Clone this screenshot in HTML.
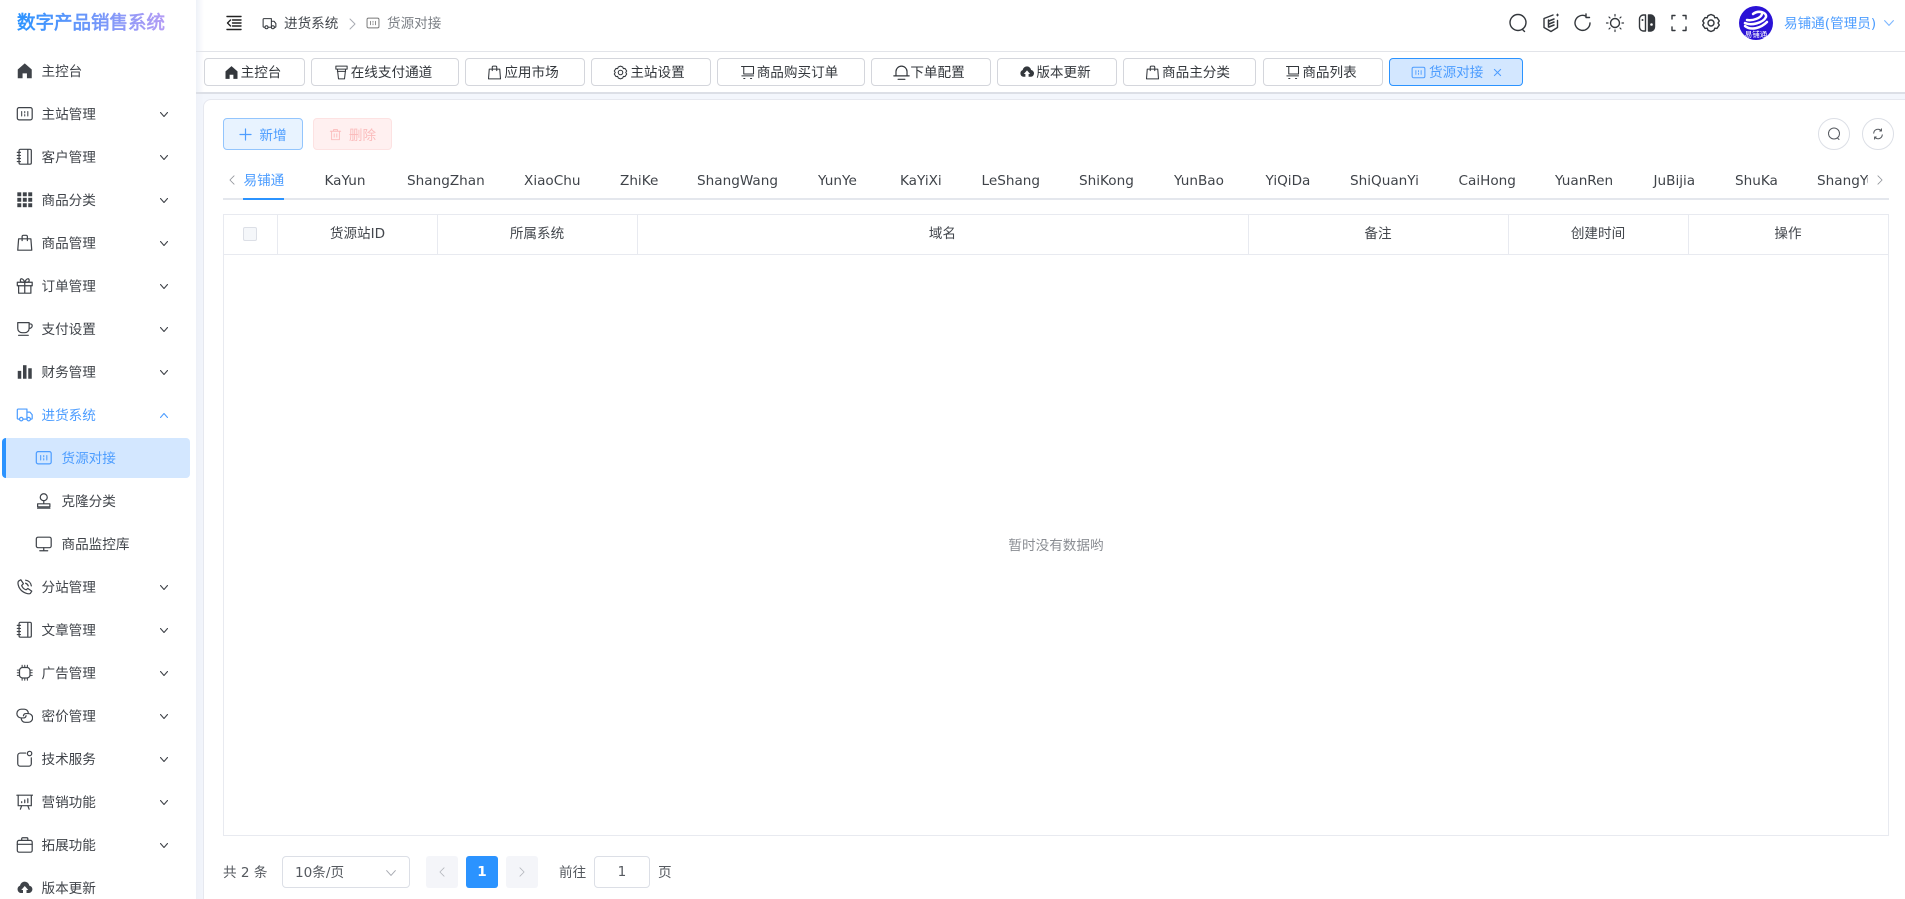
<!DOCTYPE html>
<html lang="zh-CN"><head><meta charset="utf-8"><title>货源对接</title>
<style>
*{box-sizing:border-box;margin:0;padding:0}
html,body{width:1905px;height:899px;overflow:hidden;background:#fff}
body{position:relative;font-family:"DejaVu Sans",sans-serif;font-size:13.6px;color:#3f4349}
.a{position:absolute;white-space:nowrap}
svg{display:block;fill:none;stroke:currentColor;stroke-width:1.4;stroke-linecap:round;stroke-linejoin:round}
.mi{position:absolute;left:0;width:196px;height:40px;line-height:40px;white-space:nowrap}
.mi svg{position:absolute;left:15.500px;top:11.250px;width:17.500px;height:17.500px}
.mi span{position:absolute;left:41.500px;top:1px}
.mi .ch{position:absolute;left:160px;top:17.500px;width:8px;height:5px;stroke-width:1.100}
.sub svg{left:35px}.sub span{left:61.500px}
.t{position:absolute;top:58px;height:28px;border:1px solid #d4d6dc;border-radius:4px;background:#fff;display:flex;align-items:center;justify-content:center;gap:0;font-size:13.6px;color:#33373c;padding-bottom:2px}
.t svg{width:15px;height:15px;margin:2px 2px 0 -4px}
.l{position:absolute;top:169px;height:24px;line-height:24px;font-size:13.6px;color:#3f4349;white-space:nowrap}
.th{position:absolute;top:215px;height:39px;line-height:39px;text-align:center;font-size:13.6px;color:#43474d}
.v{position:absolute;top:214px;width:1px;height:41px;background:#e8eaf0}
.top{position:absolute;top:13px;width:20px;height:20px;color:#33373c}
</style></head><body>
<svg width="0" height="0" style="position:absolute">
<symbol id="i-home" viewBox="0 0 20 20"><path fill="currentColor" stroke="none" d="M10 1.500 18 8.500V18.500H12.500V13H7.500V18.500H2V8.500Z"/></symbol>
<symbol id="i-card" viewBox="0 0 20 20"><rect x="1.500" y="3" width="17" height="14" rx="2"/><path d="M6.500 7.500v5M13.500 7.500v5M10 7.500v1.500M10 11v1.500" stroke-width="1.200"/></symbol>
<symbol id="i-note" viewBox="0 0 20 20"><rect x="3.500" y="1.500" width="14" height="17" rx="1.500"/><path d="M13.500 2v16M1.500 5h3.500M1.500 8.500h3.500M1.500 12h3.500M1.500 15.500h3.500"/></symbol>
<symbol id="i-grid" viewBox="0 0 20 20"><g fill="currentColor" stroke="none"><rect x="1.500" y="1.500" width="4.500" height="4.500"/><rect x="7.800" y="1.500" width="4.500" height="4.500"/><rect x="14" y="1.500" width="4.500" height="4.500"/><rect x="1.500" y="7.800" width="4.500" height="4.500"/><rect x="7.800" y="7.800" width="4.500" height="4.500"/><rect x="14" y="7.800" width="4.500" height="4.500"/><rect x="1.500" y="14" width="4.500" height="4.500"/><rect x="7.800" y="14" width="4.500" height="4.500"/><rect x="14" y="14" width="4.500" height="4.500"/></g></symbol>
<symbol id="i-bag" viewBox="0 0 20 20"><path d="M3 5.500H17L18 18.500H2ZM7 7.500V3A1.500 1.500 0 0 1 8.500 1.500H11.500A1.500 1.500 0 0 1 13 3V7.500"/></symbol>
<symbol id="i-gift" viewBox="0 0 20 20"><rect x="1.500" y="6" width="17" height="4"/><path d="M3 10V18.500H17V10M10 6V18.500M10 6C8 1 4.500 1 5 4.500 5 5.500 7 6 10 6ZM10 6C12 1 15.500 1 15 4.500 15 5.500 13 6 10 6Z"/></symbol>
<symbol id="i-cup" viewBox="0 0 20 20"><path d="M2 3H15V9.500A5 5 0 0 1 10 14.500H7A5 5 0 0 1 2 9.500ZM15 4.500H16.500A2 2 0 0 1 18.500 6.500A3 3 0 0 1 15 9.500M3 17.500H14"/></symbol>
<symbol id="i-bars" viewBox="0 0 20 20"><g fill="currentColor" stroke="none"><rect x="2" y="9" width="4" height="9"/><rect x="8" y="2.500" width="4" height="15.500"/><rect x="14" y="6" width="4" height="12"/></g></symbol>
<symbol id="i-truck" viewBox="0 0 20 20"><path d="M4 15H2.500A1 1 0 0 1 1.500 14V4.500A1 1 0 0 1 2.500 3.500H12.500V15H8.500M12.500 7H16L18.500 10V14A1 1 0 0 1 17.500 15H16.500"/><circle cx="6" cy="15" r="2"/><circle cx="14.500" cy="15" r="2"/></symbol>
<symbol id="i-stamp" viewBox="0 0 20 20"><circle cx="10" cy="6" r="4"/><path d="M10 10V13.500M3 13.500H17V17H3ZM3 18.500H17"/></symbol>
<symbol id="i-mon" viewBox="0 0 20 20"><rect x="1.500" y="2.500" width="17" height="12" rx="2"/><path d="M10 14.500V18M5.500 18H14.500"/></symbol>
<symbol id="i-phone" viewBox="0 0 20 20"><path d="M3 3.500 5.500 2 8.500 6.500 6.500 8.500C7 10.500 9 13 11.500 13.500L13.500 12 18 15 16.500 17.500C15 19 8 17 5 13 2.500 10 1.500 5 3 3.500ZM11 2.500C14.500 3 17 5.500 17.500 9M11 6C12.500 6.500 13.500 7.500 14 9"/></symbol>
<symbol id="i-chip" viewBox="0 0 20 20"><rect x="4" y="4" width="12" height="12" rx="3.500"/><path d="M7 1.500V4M10 1.500V4M13 1.500V4M7 16V18.500M10 16V18.500M13 16V18.500M1.500 7H4M1.500 10H4M1.500 13H4M16 7H18.500M16 10H18.500M16 13H18.500" stroke-width="1.200"/></symbol>
<symbol id="i-link" viewBox="0 0 20 20"><path d="M8 12.500H6A4.500 4.500 0 0 1 6 2.500H9.500A4.500 4.500 0 0 1 14 7M12 7.500H14A5 5 0 0 1 14 17.500H10.500A4.500 4.500 0 0 1 6 13M8.500 10A3 3 0 0 1 11.500 7.500M11.500 10A3 3 0 0 1 8.500 12.500"/></symbol>
<symbol id="i-sq" viewBox="0 0 20 20"><path d="M11 3.500H5A3 3 0 0 0 2 6.500V15.500A3 3 0 0 0 5 18.500H14.500A3 3 0 0 0 17.500 15.500V9"/><circle cx="15.500" cy="4" r="2.500"/></symbol>
<symbol id="i-board" viewBox="0 0 20 20"><path d="M1 2.500H19M2.500 2.500V14.500H17.500V2.500M6.500 14.500 5 18.500M13.500 14.500 15 18.500M6.500 11V10M10 11V8M13.500 11V6.500"/></symbol>
<symbol id="i-brief" viewBox="0 0 20 20"><rect x="1.500" y="5" width="17" height="13.500" rx="2"/><path d="M1.500 9.500H18.500M6.500 5V3A1 1 0 0 1 7.500 2H12.500A1 1 0 0 1 13.500 3V5"/></symbol>
<symbol id="i-cloud" viewBox="0 0 20 20"><path fill="currentColor" stroke="none" d="M10 3A5.500 5.500 0 0 1 15.200 7.500 4.300 4.300 0 0 1 15 16H12V12.500H14L10 8 6 12.500H8V16H5A4.500 4.500 0 0 1 4.600 7.500 5.500 5.500 0 0 1 10 3Z"/></symbol>
<symbol id="i-trash" viewBox="0 0 20 20"><path d="M2 5H18M7 5V2.500H13V5M4 5V18H16V5M8 9V14M12 9V14"/></symbol>
<symbol id="i-cuptab" viewBox="0 0 20 20"><path d="M2.500 1.500H17.500V5.500H2.500ZM4.500 5.500 6 18.500H14L15.500 5.500M4.500 8.500H15.500"/></symbol>
<symbol id="i-cart" viewBox="0 0 20 20"><path d="M2 2H18V12H5V2M2.500 14.500H18M5 18H6.500M14 18H15.500"/></symbol>
<symbol id="i-bell" viewBox="0 0 20 20"><path d="M3.500 13.500V9A6.500 6.500 0 0 1 16.500 9V13.500M1 14H19M6 18H14"/></symbol>
<symbol id="i-gear" viewBox="0 0 20 20"><path d="M10 1.500 13 2.700 13.800 4.800 16 4.600 18.300 8 17 10 18.300 12 16 15.400 13.800 15.200 13 17.300 10 18.500 7 17.300 6.200 15.200 4 15.400 1.700 12 3 10 1.700 8 4 4.600 6.200 4.800 7 2.700Z"/><circle cx="10" cy="10" r="3"/></symbol>
<symbol id="ch-d" viewBox="0 0 8 5" preserveAspectRatio="none"><path d="M.5 .5 4 4.500 7.500 .5" vector-effect="non-scaling-stroke"/></symbol>
<symbol id="ch-u" viewBox="0 0 8 5" preserveAspectRatio="none"><path d="M.5 4.500 4 .5 7.500 4.500" vector-effect="non-scaling-stroke"/></symbol>
</svg>

<!-- sidebar -->
<div class="a" style="left:196px;top:94px;width:1709px;height:805px;background:#f3f6fc"></div>
<div class="a" style="left:196px;top:0;width:8px;height:899px;background:linear-gradient(90deg,#eef1f8,rgba(238,241,248,0));"></div>
<div class="a" style="left:17px;top:11px;height:26px;line-height:26px;font-size:18.500px;font-weight:700;background:linear-gradient(90deg,#2b93ff,#b49cf5);-webkit-background-clip:text;background-clip:text;color:transparent">数字产品销售系统</div>

<div class="mi" style="top:51px"><svg><use href="#i-home"/></svg><span>主控台</span></div>
<div class="mi" style="top:94px"><svg><use href="#i-card"/></svg><span>主站管理</span><svg class="ch"><use href="#ch-d"/></svg></div>
<div class="mi" style="top:137px"><svg><use href="#i-note"/></svg><span>客户管理</span><svg class="ch"><use href="#ch-d"/></svg></div>
<div class="mi" style="top:180px"><svg><use href="#i-grid"/></svg><span>商品分类</span><svg class="ch"><use href="#ch-d"/></svg></div>
<div class="mi" style="top:223px"><svg><use href="#i-bag"/></svg><span>商品管理</span><svg class="ch"><use href="#ch-d"/></svg></div>
<div class="mi" style="top:266px"><svg><use href="#i-gift"/></svg><span>订单管理</span><svg class="ch"><use href="#ch-d"/></svg></div>
<div class="mi" style="top:309px"><svg><use href="#i-cup"/></svg><span>支付设置</span><svg class="ch"><use href="#ch-d"/></svg></div>
<div class="mi" style="top:352px"><svg><use href="#i-bars"/></svg><span>财务管理</span><svg class="ch"><use href="#ch-d"/></svg></div>
<div class="mi" style="top:395px;color:#4d9dff"><svg><use href="#i-truck"/></svg><span>进货系统</span><svg class="ch"><use href="#ch-u"/></svg></div>
<div class="a" style="left:2px;top:438px;width:188px;height:40px;background:#d3e7ff;border-radius:4px;overflow:hidden"><div style="width:4px;height:40px;background:#2b93ff"></div></div>
<div class="mi sub" style="top:438px;color:#4d9dff"><svg><use href="#i-card"/></svg><span>货源对接</span></div>
<div class="mi sub" style="top:481px"><svg><use href="#i-stamp"/></svg><span>克隆分类</span></div>
<div class="mi sub" style="top:524px"><svg><use href="#i-mon"/></svg><span>商品监控库</span></div>
<div class="mi" style="top:567px"><svg><use href="#i-phone"/></svg><span>分站管理</span><svg class="ch"><use href="#ch-d"/></svg></div>
<div class="mi" style="top:610px"><svg><use href="#i-note"/></svg><span>文章管理</span><svg class="ch"><use href="#ch-d"/></svg></div>
<div class="mi" style="top:653px"><svg><use href="#i-chip"/></svg><span>广告管理</span><svg class="ch"><use href="#ch-d"/></svg></div>
<div class="mi" style="top:696px"><svg><use href="#i-link"/></svg><span>密价管理</span><svg class="ch"><use href="#ch-d"/></svg></div>
<div class="mi" style="top:739px"><svg><use href="#i-sq"/></svg><span>技术服务</span><svg class="ch"><use href="#ch-d"/></svg></div>
<div class="mi" style="top:782px"><svg><use href="#i-board"/></svg><span>营销功能</span><svg class="ch"><use href="#ch-d"/></svg></div>
<div class="mi" style="top:825px"><svg><use href="#i-brief"/></svg><span>拓展功能</span><svg class="ch"><use href="#ch-d"/></svg></div>
<div class="mi" style="top:868px"><svg><use href="#i-cloud"/></svg><span>版本更新</span></div>

<!-- header -->
<div class="a" style="left:196px;top:51px;width:1709px;height:1px;background:#e2e4e9"></div>
<svg class="a" style="left:226px;top:15px;width:16px;height:16px;color:#222" viewBox="0 0 16 16"><path d="M1 1.500H15M6.500 5H15M6.500 8H15M6.500 11H15M1 14.500H15M4.500 5 1.500 8 4.500 11" stroke-width="1.400"/></svg>
<svg class="a" style="left:262px;top:16px;width:15px;height:15px;color:#33373c"><use href="#i-truck"/></svg>
<div class="a" style="left:284px;top:14px;line-height:20px;color:#43474d">进货系统</div>
<svg class="a" style="left:349px;top:18px;width:7px;height:12px;color:#a8abb2;stroke-width:1" viewBox="0 0 7 12"><path d="M1 1 6 6 1 11"/></svg>
<svg class="a" style="left:366px;top:16px;width:14px;height:14px;color:#777"><use href="#i-card"/></svg>
<div class="a" style="left:387px;top:14px;line-height:20px;color:#7d8187">货源对接</div>

<svg class="top" style="left:1508px" viewBox="0 0 20 20"><circle cx="10" cy="9.500" r="8"/><path d="M14.500 16.500 16.500 18.500"/></svg>
<svg class="top" style="left:1541px" viewBox="0 0 20 20"><path d="M12 2 3 5.500V14.500L10 18.500 16.500 14.500V7.500"/><path d="M8 8 13 6M8 11 13 9M8 14 13 12M7.500 7V14" stroke-width="1.500"/><path d="M16.500 1V3M15.500 2H17.500" stroke-width="1"/></svg>
<svg class="top" style="left:1573px" viewBox="0 0 20 20"><path d="M17 10A7.500 7.500 0 1 1 12.500 3M13 1 13 4.500 16.500 4.500"/></svg>
<svg class="top" style="left:1605px" viewBox="0 0 20 20"><circle cx="10" cy="10" r="4.500"/><path d="M10 1.500V3M10 17V18.500M1.500 10H3M17 10H18.500M4 4 5 5M15 15 16 16M16 4 15 5M5 15 4 16" stroke-width="1.200"/></svg>
<svg class="top" style="left:1637px" viewBox="0 0 20 20"><path d="M8.500 2H6A4 4 0 0 0 2.500 6V14A4 4 0 0 0 6 18H8.500Z"/><path fill="currentColor" d="M11.500 2H14A4 4 0 0 1 17.500 6V14A4 4 0 0 1 14 18H11.500Z"/><circle cx="5.500" cy="7" r="1" fill="currentColor" stroke="none"/><circle cx="14.500" cy="11.500" r="1.300" fill="#fff" stroke="none"/></svg>
<svg class="top" style="left:1669px" viewBox="0 0 20 20"><path d="M6 2.500H3V6M14 2.500H17V6M3 14V17.500H6M17 14V17.500H14"/></svg>
<svg class="top" style="left:1701px"><use href="#i-gear"/></svg>
<svg class="a" style="left:1739px;top:6px;width:34px;height:34px;stroke:none" viewBox="0 0 34 34"><circle cx="17" cy="17" r="17" fill="#2a12d6"/><path d="M6 17C12 20 24 17 27 11 28 6 19 4 14 8M8 14C14 15 22 12 23 8" stroke="#fff" stroke-width="2.500" fill="none"/><path d="M6 20C12 25 22 22 28 16" stroke="#fff" stroke-width="2.500" fill="none"/><text x="17" y="31" text-anchor="middle" font-size="7.500" fill="#fff" stroke="none">易铺通</text></svg>
<div class="a" style="left:1784px;top:14px;line-height:20px;color:#4d9dff">易铺通(管理员)</div>
<svg class="a" style="left:1884px;top:20px;width:10px;height:6px;color:#7db7ff;stroke-width:1.100"><use href="#ch-d"/></svg>

<!-- tag tabs -->
<div class="a" style="left:196px;top:92px;width:1709px;height:2px;background:#dcdfe6"></div>
<div class="t" style="left:204px;width:101px"><svg><use href="#i-home"/></svg>主控台</div>
<div class="t" style="left:311px;width:148px"><svg><use href="#i-cuptab"/></svg>在线支付通道</div>
<div class="t" style="left:465px;width:120px"><svg><use href="#i-bag"/></svg>应用市场</div>
<div class="t" style="left:591px;width:120px"><svg><use href="#i-gear"/></svg>主站设置</div>
<div class="t" style="left:717px;width:148px"><svg><use href="#i-cart"/></svg>商品购买订单</div>
<div class="t" style="left:871px;width:120px"><svg style="width:17px;height:17px;margin:2px 0 0 -4px"><use href="#i-bell"/></svg>下单配置</div>
<div class="t" style="left:997px;width:120px"><svg style="width:16px;height:16px;margin:2px 1px 0 -4px"><use href="#i-cloud"/></svg>版本更新</div>
<div class="t" style="left:1123px;width:133px"><svg><use href="#i-bag"/></svg>商品主分类</div>
<div class="t" style="left:1263px;width:120px"><svg><use href="#i-cart"/></svg>商品列表</div>
<div class="t" style="left:1389px;width:134px;background:#d3e7ff;border-color:#2b93ff;color:#4d9dff;justify-content:flex-start;padding-left:21px"><svg style="margin:2px 3px 0 0"><use href="#i-card"/></svg>货源对接<svg style="width:9px;height:9px;margin:2px 0 0 10px;stroke-width:1.100" viewBox="0 0 10 10"><path d="M1.500 1.500 8.500 8.500M8.500 1.500 1.500 8.500"/></svg></div>

<!-- card -->
<div class="a" style="left:203px;top:99px;width:1710px;height:810px;background:#fff;border:1px solid #e6e8ef;border-radius:8px"></div>
<div class="a" style="left:223px;top:118px;width:80px;height:32px;background:#e8f3ff;border:1px solid #93c5fd;border-radius:4px;color:#4d9dff;display:flex;align-items:center;justify-content:center;gap:7px"><svg style="width:13px;height:13px;stroke-width:1.200" viewBox="0 0 13 13"><path d="M6.500 1V12M1 6.500H12"/></svg>新增</div>
<div class="a" style="left:313px;top:118px;width:79px;height:32px;background:#fff0f0;border:1px solid #fde2e2;border-radius:4px;color:#fbbcbc;display:flex;align-items:center;justify-content:center;gap:7px"><svg style="width:13px;height:13px"><use href="#i-trash"/></svg>删除</div>
<div class="a" style="left:1818px;top:118px;width:32px;height:32px;border:1px solid #dcdfe6;border-radius:50%;background:#fff"><svg style="position:absolute;left:8px;top:8px;width:14px;height:14px;color:#55595f;stroke-width:1" viewBox="0 0 14 14"><circle cx="7" cy="6.500" r="5.500"/><path d="M10.500 11 12 12.500"/></svg></div>
<div class="a" style="left:1862px;top:118px;width:32px;height:32px;border:1px solid #dcdfe6;border-radius:50%;background:#fff"><svg style="position:absolute;left:9px;top:9px;width:12px;height:12px;color:#55595f;stroke-width:1.200" viewBox="0 0 14 14"><path d="M2 6A5 5 0 0 1 11 3.500M12 8A5 5 0 0 1 3 10.500M11 1V3.500H9M3 13V10.500H5"/></svg></div>

<!-- source tabs -->
<svg class="a" style="left:229px;top:175px;width:6px;height:10px;color:#909399;stroke-width:1" viewBox="0 0 7 12"><path d="M6 1 1 6 6 11"/></svg>
<div class="l" style="left:243.500px;color:#4d9dff">易铺通</div>
<div class="l" style="left:324.500px">KaYun</div>
<div class="l" style="left:407px">ShangZhan</div>
<div class="l" style="left:524px">XiaoChu</div>
<div class="l" style="left:620px">ZhiKe</div>
<div class="l" style="left:697px">ShangWang</div>
<div class="l" style="left:818px">YunYe</div>
<div class="l" style="left:900px">KaYiXi</div>
<div class="l" style="left:981.500px">LeShang</div>
<div class="l" style="left:1079px">ShiKong</div>
<div class="l" style="left:1174px">YunBao</div>
<div class="l" style="left:1265.500px">YiQiDa</div>
<div class="l" style="left:1350px">ShiQuanYi</div>
<div class="l" style="left:1458.500px">CaiHong</div>
<div class="l" style="left:1555px">YuanRen</div>
<div class="l" style="left:1653.500px">JuBijia</div>
<div class="l" style="left:1735px">ShuKa</div>
<div class="l" style="left:1817px;width:51px;overflow:hidden">ShangYun</div>
<svg class="a" style="left:1877px;top:175px;width:6px;height:10px;color:#909399;stroke-width:1" viewBox="0 0 7 12"><path d="M1 1 6 6 1 11"/></svg>
<div class="a" style="left:223px;top:198px;width:1666px;height:2px;background:#e4e7ed"></div>
<div class="a" style="left:243px;top:198px;width:41px;height:2px;background:#2b93ff"></div>

<!-- table -->
<div class="a" style="left:223px;top:214px;width:1666px;height:622px;border:1px solid #e8eaf0"></div>
<div class="a" style="left:223px;top:254px;width:1666px;height:1px;background:#e8eaf0"></div>
<div class="v" style="left:277px"></div><div class="v" style="left:437px"></div><div class="v" style="left:637px"></div><div class="v" style="left:1248px"></div><div class="v" style="left:1508px"></div><div class="v" style="left:1688px"></div>
<div class="a" style="left:243px;top:227px;width:14px;height:14px;background:#f5f7fa;border:1px solid #dcdfe6;border-radius:2px"></div>
<div class="th" style="left:277.500px;width:160px">货源站ID</div>
<div class="th" style="left:437px;width:200px">所属系统</div>
<div class="th" style="left:637px;width:611px">域名</div>
<div class="th" style="left:1248px;width:260px">备注</div>
<div class="th" style="left:1508px;width:180px">创建时间</div>
<div class="th" style="left:1688px;width:200px">操作</div>
<div class="a" style="left:638px;top:536px;width:836px;text-align:center;line-height:20px;color:#8a8d93;font-size:13.600px">暂时没有数据哟</div>

<!-- pagination -->
<div class="a" style="left:223px;top:863px;line-height:20px;color:#55595f">共 2 条</div>
<div class="a" style="left:282px;top:856px;width:128px;height:32px;border:1px solid #dcdfe6;border-radius:4px;line-height:32px;padding-left:12px;color:#55595f">10条/页<svg style="position:absolute;right:13px;top:13px;width:10px;height:6px;color:#a8abb2;stroke-width:1"><use href="#ch-d"/></svg></div>
<div class="a" style="left:426px;top:856px;width:32px;height:32px;background:#f4f5f9;border-radius:3px"><svg style="position:absolute;left:13px;top:11px;width:6px;height:10px;color:#b4b7bd;stroke-width:1" viewBox="0 0 7 12"><path d="M6 1 1 6 6 11"/></svg></div>
<div class="a" style="left:466px;top:856px;width:32px;height:32px;background:#2b93ff;border-radius:3px;color:#fff;font-weight:700;text-align:center;line-height:33px">1</div>
<div class="a" style="left:506px;top:856px;width:32px;height:32px;background:#f4f5f9;border-radius:3px"><svg style="position:absolute;left:13px;top:11px;width:6px;height:10px;color:#b4b7bd;stroke-width:1" viewBox="0 0 7 12"><path d="M1 1 6 6 1 11"/></svg></div>
<div class="a" style="left:559px;top:863px;line-height:20px;color:#55595f">前往</div>
<div class="a" style="left:594px;top:856px;width:56px;height:32px;border:1px solid #dcdfe6;border-radius:4px;text-align:center;line-height:31px;color:#55595f">1</div>
<div class="a" style="left:658px;top:863px;line-height:20px;color:#55595f">页</div>
</body></html>
